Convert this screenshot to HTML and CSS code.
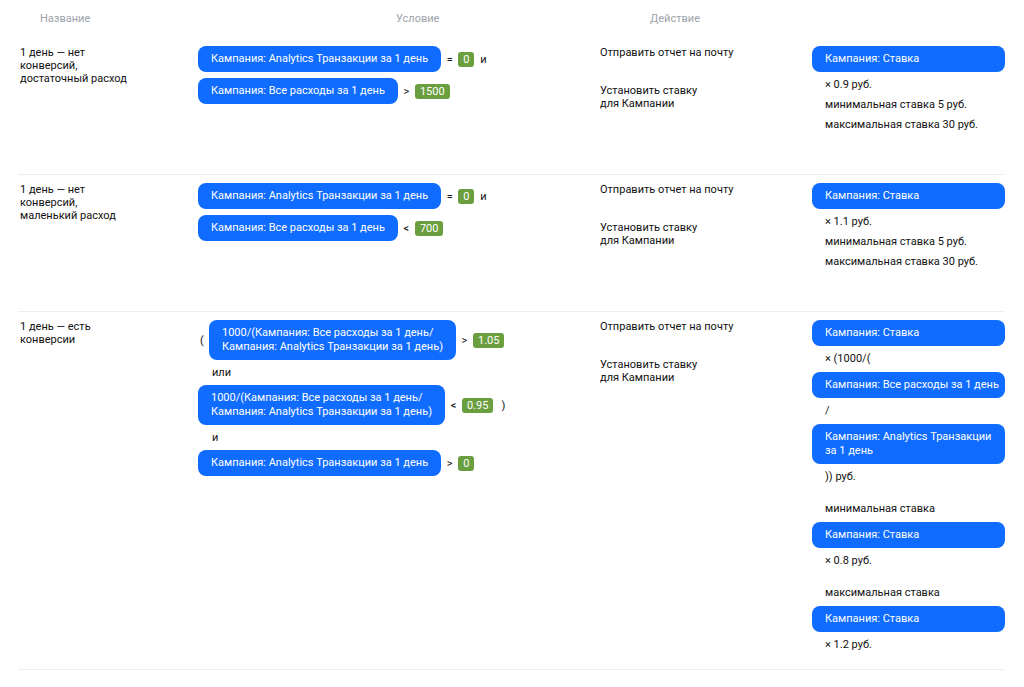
FILE: index.html
```html
<!DOCTYPE html>
<html lang="ru">
<head>
<meta charset="utf-8">
<title>Правила</title>
<link rel="stylesheet" href="styles.css">
</head>
<body>
<div class="table">
  <div class="head">
    <div class="h-name">Название</div>
    <div class="h-cond">Условие</div>
    <div class="h-act">Действие</div>
    <div></div>
  </div>

  <div class="row">
    <div class="name">1 день — нет<br>конверсий,<br>достаточный расход</div>
    <div class="cond">
      <div class="line"><span class="pill">Кампания: Analytics Транзакции за 1 день</span><span class="op">=</span><span class="val">0</span><span class="conj">и</span></div>
      <div class="line"><span class="pill">Кампания: Все расходы за 1 день</span><span class="op">&gt;</span><span class="val">1500</span></div>
    </div>
    <div class="act">
      <div class="act-item">Отправить отчет на почту</div>
      <div class="act-item">Установить ставку<br>для Кампании</div>
    </div>
    <div class="res">
      <div class="bpill">Кампания: Ставка</div>
      <div class="txt">× 0.9 руб.</div>
      <div class="txt">минимальная ставка 5 руб.</div>
      <div class="txt">максимальная ставка 30 руб.</div>
    </div>
  </div>

  <div class="row">
    <div class="name">1 день — нет<br>конверсий,<br>маленький расход</div>
    <div class="cond">
      <div class="line"><span class="pill">Кампания: Analytics Транзакции за 1 день</span><span class="op">=</span><span class="val">0</span><span class="conj">и</span></div>
      <div class="line"><span class="pill">Кампания: Все расходы за 1 день</span><span class="op">&lt;</span><span class="val">700</span></div>
    </div>
    <div class="act">
      <div class="act-item">Отправить отчет на почту</div>
      <div class="act-item">Установить ставку<br>для Кампании</div>
    </div>
    <div class="res">
      <div class="bpill">Кампания: Ставка</div>
      <div class="txt">× 1.1 руб.</div>
      <div class="txt">минимальная ставка 5 руб.</div>
      <div class="txt">максимальная ставка 30 руб.</div>
    </div>
  </div>

  <div class="row">
    <div class="name">1 день — есть<br>конверсии</div>
    <div class="cond">
      <div class="line"><span class="paren">(</span><span class="pill">1000/(Кампания: Все расходы за 1 день/<br>Кампания: Analytics Транзакции за 1 день)</span><span class="op">&gt;</span><span class="val">1.05</span></div>
      <div class="conn">или</div>
      <div class="line"><span class="pill">1000/(Кампания: Все расходы за 1 день/<br>Кампания: Analytics Транзакции за 1 день)</span><span class="op">&lt;</span><span class="val">0.95</span><span class="paren close">)</span></div>
      <div class="conn">и</div>
      <div class="line"><span class="pill">Кампания: Analytics Транзакции за 1 день</span><span class="op">&gt;</span><span class="val">0</span></div>
    </div>
    <div class="act">
      <div class="act-item">Отправить отчет на почту</div>
      <div class="act-item">Установить ставку<br>для Кампании</div>
    </div>
    <div class="res">
      <div class="bpill">Кампания: Ставка</div>
      <div class="txt">× (1000/(</div>
      <div class="bpill">Кампания: Все расходы за 1 день</div>
      <div class="txt">/</div>
      <div class="bpill">Кампания: Analytics Транзакции<br>за 1 день</div>
      <div class="txt">)) руб.</div>
      <div class="txt group">минимальная ставка</div>
      <div class="bpill">Кампания: Ставка</div>
      <div class="txt">× 0.8 руб.</div>
      <div class="txt group">максимальная ставка</div>
      <div class="bpill">Кампания: Ставка</div>
      <div class="txt">× 1.2 руб.</div>
    </div>
  </div>
</div>
</body>
</html>
```

FILE: styles.css
```css
* { box-sizing: border-box; }

body {
  margin: 0;
  background: #fff;
  font-family: "Roboto", "Liberation Sans", sans-serif;
  font-size: 11px;
  line-height: 13px;
  color: #111;
}

.table {
  margin-left: 18px;
  width: 987px;
}

.head,
.row {
  display: grid;
  grid-template-columns: 180px 402px 212px 193px;
}

.head {
  padding: 12px 0 13px;
  color: #9da3ab;
}

.h-name { padding-left: 22px; }
.h-cond { padding-left: 198px; }
.h-act { padding-left: 50px; }

.row {
  min-height: 137px;
  padding: 8px 0 14px;
  border-bottom: 1px solid #eceef1;
}

.name { padding-left: 2px; }

.cond {
  display: flex;
  flex-direction: column;
  align-items: flex-start;
  gap: 6px;
}

.line {
  display: flex;
  align-items: center;
  gap: 5px;
}

.pill,
.bpill {
  background: #0f6cff;
  color: #fff;
  border-radius: 8px;
  padding: 6px 13px;
  line-height: 14px;
  white-space: nowrap;
}

.paren { width: 4px; margin-left: 2px; }
.paren.close { margin-left: 3px; }

.op { width: 7px; text-align: center; }

.conj { margin-left: 1px; }

.val {
  background: #6a9e3f;
  color: #fff;
  border-radius: 3px;
  padding: 1px 5px 1px;
  line-height: 13px;
}

.conn {
  padding-left: 14px;
}

.act {
  display: flex;
  flex-direction: column;
  gap: 25px;
}

.res .bpill {
  margin: 3px 0;
}

.res .bpill:first-child { margin-top: 0; }

.txt {
  padding-left: 13px;
  line-height: 20px;
}

.txt.group { margin-top: 12px; }
```
